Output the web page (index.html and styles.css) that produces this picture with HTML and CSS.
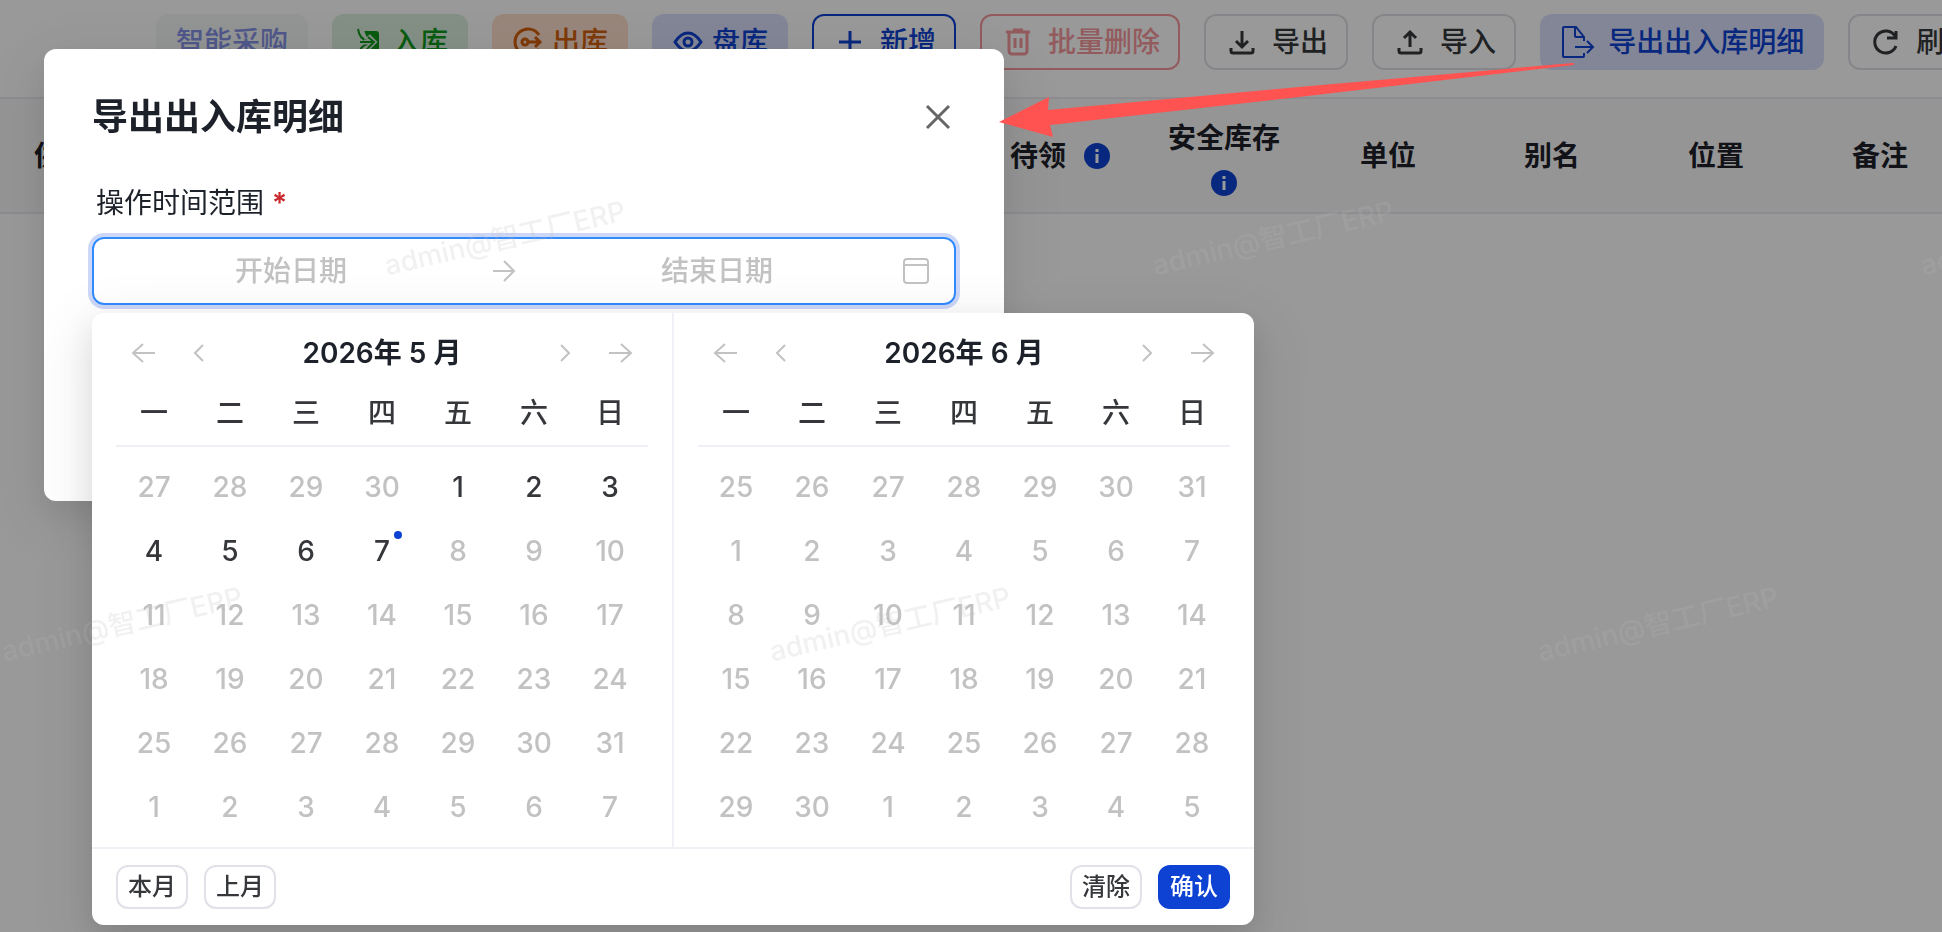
FILE: index.html
```html
<!DOCTYPE html>
<html lang="zh-CN">

<head>
    <meta charset="UTF-8">
    <meta name="viewport" content="width=device-width, initial-scale=1.0">
    <title>导出出入库明细</title>
    <link rel="stylesheet" href="styles.css">
</head>

<body>
    <div class="page">
        <div class="toolbar">
            <button type="button" class="btn btn-ghost">智能采购</button>
            <button type="button" class="btn btn-in">
                <svg class="icon" viewBox="0 0 32 32">
                    <path d="M11 5h13a3 3 0 0 1 3 3v18a3 3 0 0 1-3 3H11z" fill="currentColor" />
                    <path d="M3 3h9c1 6 3 9 6 11v5c-3 2-5 5-7 11H3z" fill="#dcf0df" />
                    <path d="M6 3c1 7 4 11 10 12M7 28c1-6 4-9 9-10" fill="none" stroke="currentColor" stroke-width="2" />
                    <path d="M12 16h10M16 10l6 6-6 6" fill="none" stroke="#dcf0df" stroke-width="5" />
                    <path d="M8 16h14M16 11l6 5-6 6" fill="none" stroke="currentColor" stroke-width="2" />
                </svg>
                入库
            </button>
            <button type="button" class="btn btn-out">
                <svg class="icon line" viewBox="0 0 32 32">
                    <path d="M27 9a13 13 0 1 0 0 14" />
                    <circle cx="13" cy="16" r="3" />
                    <path d="M16 16h12M23 11l5 5-5 5" />
                </svg>
                出库
            </button>
            <button type="button" class="btn btn-check">
                <svg class="icon line" viewBox="0 0 32 32">
                    <path d="M3 16c4-6 8-9 13-9s9 3 13 9c-4 6-8 9-13 9s-9-3-13-9z" />
                    <circle cx="16" cy="16" r="4" />
                </svg>
                盘库
            </button>
            <button type="button" class="btn btn-outline btn-add">
                <svg class="icon-lg line" viewBox="0 0 36 36">
                    <path d="M18 7v22M7 18h22" />
                </svg>
                新增
            </button>
            <button type="button" class="btn btn-outline btn-delete">
                <svg class="icon-lg line" viewBox="0 0 36 36">
                    <path d="M6 8h24M13 6h10M9 8v19a3 3 0 0 0 3 3h12a3 3 0 0 0 3-3V8M15 14v10M21 14v10" />
                </svg>
                批量删除
            </button>
            <button type="button" class="btn btn-outline">
                <svg class="icon-lg line" viewBox="0 0 36 36">
                    <path d="M18 7v15M12 17l6 6 6-6M7 24v3a2 2 0 0 0 2 2h18a2 2 0 0 0 2-2v-3" />
                </svg>
                导出
            </button>
            <button type="button" class="btn btn-outline">
                <svg class="icon-lg line" viewBox="0 0 36 36">
                    <path d="M18 23V8M12 14l6-6 6 6M7 24v3a2 2 0 0 0 2 2h18a2 2 0 0 0 2-2v-3" />
                </svg>
                导入
            </button>
            <button type="button" class="btn btn-check">
                <svg class="icon-lg line btn-gap" viewBox="0 0 36 36">
                    <path d="M24 17v-4l-8-10H4a1 1 0 0 0-1 1v28a1 1 0 0 0 1 1h19a1 1 0 0 0 1-1v-3M15 3v9a1 1 0 0 0 1 1h8M15 23h17M27 17l6 6-6 6" />
                </svg>
                导出出入库明细
            </button>
            <button type="button" class="btn btn-outline">
                <svg class="icon-lg line" viewBox="0 0 36 36">
                    <path d="M27 12a11 11 0 1 0 1 10M28 7v7h-9" />
                </svg>
                刷新
            </button>
        </div>

        <table class="stock">
            <thead>
                <tr>
                    <th class="first">供应商</th>
                    <th></th>
                    <th></th>
                    <th></th>
                    <th></th>
                    <th></th>
                    <th>
                        <div class="th-tip">待领
                            <svg class="info" viewBox="0 0 26 26">
                                <circle cx="13" cy="13" r="13" fill="currentColor" />
                                <path d="M13 11v9M13 6v3" stroke="#fff" stroke-width="3" />
                            </svg>
                        </div>
                    </th>
                    <th>
                        <div class="th-tip">安全库存
                            <svg class="info" viewBox="0 0 26 26">
                                <circle cx="13" cy="13" r="13" fill="currentColor" />
                                <path d="M13 11v9M13 6v3" stroke="#fff" stroke-width="3" />
                            </svg>
                        </div>
                    </th>
                    <th>单位</th>
                    <th>别名</th>
                    <th>位置</th>
                    <th>备注</th>
                </tr>
            </thead>
        </table>
    </div>

    <div class="mask"></div>

    <div class="modal" role="dialog" aria-labelledby="modalTitle">
        <div class="modal-header">
            <h2 id="modalTitle">导出出入库明细</h2>
            <button type="button" class="close" aria-label="关闭">
                <svg viewBox="0 0 36 36" class="icon-lg line">
                    <path d="M7 7l22 22M29 7L7 29" />
                </svg>
            </button>
        </div>
        <label class="field-label" for="startDate">操作时间范围 <span class="required">*</span></label>
        <div class="range">
            <input type="text" id="startDate" placeholder="开始日期">
            <svg class="range-arrow line" viewBox="0 0 56 28">
                <path d="M17 14h21M28 4l10 10-10 10" />
            </svg>
            <input type="text" id="endDate" placeholder="结束日期" aria-label="结束日期">
            <svg class="range-icon line" viewBox="0 0 28 28">
                <rect x="2" y="2" width="24" height="24" rx="3" />
                <path d="M2 8h24" />
            </svg>
        </div>

        <div class="picker">
            <div class="panels">
                <div class="panel">
                    <div class="panel-header">
                        <button type="button" class="nav" aria-label="上一年"><svg class="line" viewBox="0 0 28 28"><path d="M25 14H3M13 5l-10 9 10 9" /></svg></button>
                        <button type="button" class="nav" aria-label="上一月"><svg class="line" viewBox="0 0 28 28"><path d="M17 6l-8 8 8 8" /></svg></button>
                        <div class="month">2026年 5 月</div>
                        <button type="button" class="nav" aria-label="下一月"><svg class="line" viewBox="0 0 28 28"><path d="M11 6l8 8-8 8" /></svg></button>
                        <button type="button" class="nav" aria-label="下一年"><svg class="line" viewBox="0 0 28 28"><path d="M3 14h22M15 5l10 9-10 9" /></svg></button>
                    </div>
                    <table class="days" id="may"></table>
                </div>
                <div class="panel">
                    <div class="panel-header">
                        <button type="button" class="nav" aria-label="上一年"><svg class="line" viewBox="0 0 28 28"><path d="M25 14H3M13 5l-10 9 10 9" /></svg></button>
                        <button type="button" class="nav" aria-label="上一月"><svg class="line" viewBox="0 0 28 28"><path d="M17 6l-8 8 8 8" /></svg></button>
                        <div class="month">2026年 6 月</div>
                        <button type="button" class="nav" aria-label="下一月"><svg class="line" viewBox="0 0 28 28"><path d="M11 6l8 8-8 8" /></svg></button>
                        <button type="button" class="nav" aria-label="下一年"><svg class="line" viewBox="0 0 28 28"><path d="M3 14h22M15 5l10 9-10 9" /></svg></button>
                    </div>
                    <table class="days" id="june"></table>
                </div>
            </div>
            <div class="picker-footer">
                <button type="button" class="small">本月</button>
                <button type="button" class="small">上月</button>
                <button type="button" class="small push">清除</button>
                <button type="button" class="small primary">确认</button>
            </div>
        </div>
    </div>

    <svg class="pointer" viewBox="0 0 576 80">
        <path d="M0 66L50 41L49 54L300 31L574 7Q577 8 574 9L300 41L51 69L54 81Z" fill="#ff5352" />
    </svg>

    <div class="watermark" aria-hidden="true">
        <div class="watermark-row">
            <span>admin@智工厂ERP</span>
            <span>admin@智工厂ERP</span>
            <span>admin@智工厂ERP</span>
        </div>
        <div class="watermark-row shifted">
            <span>admin@智工厂ERP</span>
            <span>admin@智工厂ERP</span>
            <span>admin@智工厂ERP</span>
        </div>
    </div>

    <script src="script.js"></script>
</body>

</html>
```

FILE: styles.css
```css
* {
    box-sizing: border-box;
}

body {
    margin: 0;
    overflow: hidden;
    background: #fff;
    color: #1d2129;
    font-family: Inter, "Noto Sans CJK SC", sans-serif;
    font-size: 28px;
    line-height: 44px;
}

button,
input {
    font: inherit;
    color: inherit;
}

button {
    border: none;
    background: none;
    padding: 0;
    cursor: pointer;
}

svg {
    display: block;
    flex: none;
}

.line {
    fill: none;
    stroke: currentColor;
    stroke-width: 3;
}

/* page behind the dialog */
.page {
    min-height: 100vh;
    overflow: hidden;
}

.toolbar {
    display: flex;
    gap: 24px;
    padding: 14px 0 27px 156px;
}

.btn {
    display: flex;
    flex: none;
    align-items: center;
    gap: 8px;
    height: 56px;
    padding: 0 20px;
    border-radius: 12px;
    font-weight: 500;
    white-space: nowrap;
}

.icon {
    width: 32px;
    height: 32px;
}

.icon-lg {
    width: 36px;
    height: 36px;
}

.btn-gap {
    margin-right: 4px;
    stroke-width: 2;
}

.btn-ghost {
    background: #f3f8f7;
    color: #8592e6;
}

.btn-in {
    background: #dcf0df;
    color: #0f9a1c;
}

.btn-out {
    background: #ffdfcd;
    color: #d25f0a;
}

.btn-check {
    background: #d9dffa;
    color: #0e42d2;
}

.btn-outline {
    gap: 12px;
    padding: 0 18px;
    border: 2px solid #dfe0e6;
    color: #35373b;
}

.btn-add {
    border-color: #0e42d2;
    color: #0e42d2;
}

.btn-delete {
    border-color: #f5989d;
    color: #f5989d;
}

.stock {
    width: 100%;
    min-width: 1962px;
    table-layout: fixed;
    border-collapse: collapse;
}

.stock th {
    height: 115px;
    padding: 0 16px;
    border-top: 2px solid #ebebf2;
    border-bottom: 2px solid #ebebf2;
    background: #f9f9f9;
    font-weight: 600;
}

.stock .first {
    width: 158px;
    padding: 0 0 0 34px;
    text-align: left;
}

.th-tip {
    display: flex;
    flex-wrap: wrap;
    align-items: center;
    justify-content: center;
    gap: 10px 18px;
}

.info {
    width: 26px;
    height: 26px;
    color: #0e42d2;
}

.mask {
    position: fixed;
    inset: 0;
    background: rgba(0, 0, 0, 0.4);
}

/* export dialog */
.modal {
    position: absolute;
    top: 49px;
    left: 44px;
    width: 960px;
    min-height: 452px;
    padding: 40px 48px;
    border-radius: 12px;
    background: #fff;
    box-shadow: 0 12px 32px rgba(0, 0, 0, 0.08), 0 18px 56px 16px rgba(0, 0, 0, 0.05);
}

.modal-header {
    display: flex;
    align-items: center;
    justify-content: space-between;
    height: 56px;
}

.modal-header h2 {
    margin: 0;
    font-size: 36px;
    font-weight: 600;
}

.close {
    padding: 4px 0;
    color: #666;
}

.field-label {
    display: block;
    margin: 36px 0 12px;
    padding-left: 4px;
}

.required {
    color: #cb272d;
    font-weight: 600;
}

.range {
    display: flex;
    align-items: center;
    height: 68px;
    padding: 0 24px 0 12px;
    border: 2px solid #308bff;
    border-radius: 12px;
    box-shadow: 0 0 0 4px #cdd8f8;
    color: #c2c2c2;
}

.range input {
    flex: 1;
    min-width: 0;
    padding: 0;
    border: none;
    outline: none;
    background: none;
    font-weight: 500;
    text-align: center;
}

.range input::placeholder {
    color: #c2c2c2;
}

.range-arrow {
    width: 56px;
    height: 28px;
    stroke-width: 2;
}

.range-icon {
    width: 28px;
    height: 28px;
    stroke-width: 2;
}

/* date range dropdown */
.picker {
    position: absolute;
    top: 264px;
    left: 48px;
    border-radius: 12px;
    background: #fff;
    box-shadow: 0 12px 32px rgba(0, 0, 0, 0.1), 0 18px 56px 16px rgba(0, 0, 0, 0.06);
}

.panels {
    display: flex;
}

.panel {
    padding: 0 24px 8px;
}

.panel + .panel {
    border-left: 2px solid #f0f0f6;
}

.panel-header {
    display: flex;
    align-items: center;
    height: 80px;
}

.nav {
    display: flex;
    justify-content: center;
    width: 56px;
    color: #c2c2c2;
}

.nav svg {
    width: 28px;
    height: 28px;
    stroke-width: 2;
}

.month {
    flex: 1;
    font-weight: 600;
    text-align: center;
}

.days {
    width: 532px;
    table-layout: fixed;
    border-collapse: collapse;
    color: #35373b;
    text-align: center;
}

.days th {
    height: 53px;
    padding: 0 0 12px;
    border-bottom: 2px solid #f0f0f6;
    font-weight: 500;
    line-height: 40px;
}

.days td {
    height: 64px;
    padding: 0;
    color: #c2c2c2;
    font-weight: 500;
}

.days tbody::before {
    content: "";
    display: block;
    height: 8px;
}

.days .active {
    color: #35373b;
}

.today span {
    position: relative;
}

.today span::after {
    content: "";
    position: absolute;
    top: -3px;
    right: -12px;
    width: 8px;
    height: 8px;
    border-radius: 50%;
    background: #0e42d2;
}

.picker-footer {
    display: flex;
    gap: 16px;
    padding: 16px 24px;
    border-top: 2px solid #f0f0f6;
}

.small {
    height: 44px;
    padding: 0 10px;
    border: 2px solid #e1e1e9;
    border-radius: 12px;
    color: #35373b;
    font-size: 24px;
    font-weight: 500;
    line-height: 40px;
}

.push {
    margin-left: auto;
}

.primary {
    border-color: #0e42d2;
    background: #0e42d2;
    color: #fff;
}

.pointer {
    position: absolute;
    top: 56px;
    left: 999px;
    width: 576px;
    height: 80px;
    overflow: visible;
    pointer-events: none;
}

/* tiled user name over everything */
.watermark {
    position: fixed;
    inset: 0;
    padding-top: 45px;
    overflow: hidden;
    color: rgba(187, 187, 187, 0.2);
    font-weight: 500;
    pointer-events: none;
}

.watermark-row {
    display: flex;
    margin-left: 121px;
}

.watermark-row.shifted {
    margin-left: -262px;
}

.watermark-row span {
    display: flex;
    flex: none;
    align-items: center;
    justify-content: center;
    width: 768px;
    height: 386px;
    transform: rotate(-13deg);
}
```

FILE: script.js
```js
const weekNames = ['一', '二', '三', '四', '五', '六', '日'];
const today = new Date(2026, 4, 7);

// Fill a six week calendar, starting from the given monday
function renderMonth(id, start, month) {
    const table = document.getElementById(id);
    const headRow = table.createTHead().insertRow();
    weekNames.forEach((name) => {
        const th = document.createElement('th');
        th.textContent = name;
        headRow.appendChild(th);
    });

    const body = table.createTBody();
    const day = new Date(start);
    for (let week = 0; week < 6; week++) {
        const row = body.insertRow();
        for (let i = 0; i < 7; i++) {
            const cell = row.insertCell();
            const label = document.createElement('span');
            label.textContent = day.getDate();
            cell.appendChild(label);
            if (day.getMonth() === month && day <= today) {
                cell.classList.add('active');
            }
            if (day.getTime() === today.getTime()) {
                cell.classList.add('today');
            }
            day.setDate(day.getDate() + 1);
        }
    }
}

renderMonth('may', new Date(2026, 3, 27), 4);
renderMonth('june', new Date(2026, 4, 25), 5);
```
